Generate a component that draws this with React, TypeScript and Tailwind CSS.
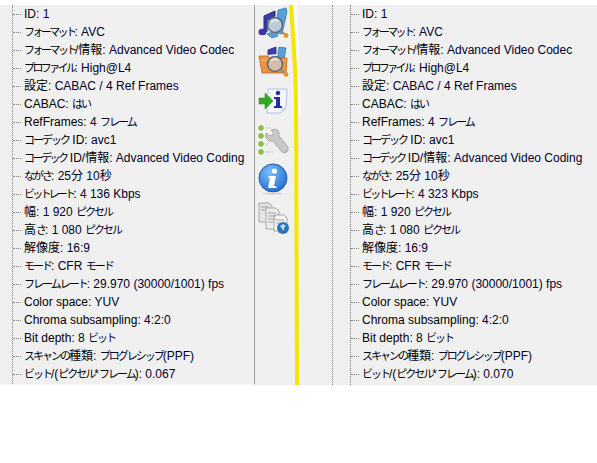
const font = '[font-family:"Liberation_Sans","Noto_Sans_CJK_JP",sans-serif]'

const left: [string, string][] = [
  ['ID', '1'],
  ['フォーマット', 'AVC'],
  ['フォーマット/情報', 'Advanced Video Codec'],
  ['プロファイル', 'High@L4'],
  ['設定', 'CABAC / 4 Ref Frames'],
  ['CABAC', 'はい'],
  ['RefFrames', '4 フレーム'],
  ['コーデック ID', 'avc1'],
  ['コーデック ID/情報', 'Advanced Video Coding'],
  ['ながさ', '25分 10秒'],
  ['ビットレート', '4 136 Kbps'],
  ['幅', '1 920 ピクセル'],
  ['高さ', '1 080 ピクセル'],
  ['解像度', '16:9'],
  ['モード', 'CFR モード'],
  ['フレームレート', '29.970 (30000/1001) fps'],
  ['Color space', 'YUV'],
  ['Chroma subsampling', '4:2:0'],
  ['Bit depth', '8 ビット'],
  ['スキャンの種類', 'プログレシップ(PPF)'],
  ['ビット/(ピクセル*フレーム)', '0.067'],
]

const right = left.map(([k, v]): [string, string] => {
  if (k === 'ビットレート') return [k, '4 323 Kbps']
  if (k === 'ビット/(ピクセル*フレーム)') return [k, '0.070']
  return [k, v]
})

const tight: Record<string, string> = {
  'フォーマット': 'tracking-[-2.6px]',
  'フォーマット/情報': 'tracking-[-2.5px]',
  'プロファイル': 'tracking-[-2.6px]',
  'コーデック ID/情報': 'tracking-[-2.5px]',
  'ビットレート': 'tracking-[-2.8px]',
}

// kana is much narrower in the original UI font
function Txt({ s, track = 'tracking-[-2px]' }: { s: string; track?: string }) {
  return (
    <>
      {s.split(/([\u3040-\u30ff]+)/).map((part, i) =>
        i % 2 === 1 ? (
          <span key={i} className={`text-[11px] ${track}`}>{part}</span>
        ) : (
          <span key={i}>{part}</span>
        ),
      )}
    </>
  )
}

function Rows({ rows }: { rows: [string, string][] }) {
  return (
    <div className="flex flex-col">
      {rows.map(([k, v]) => (
        <div key={k} className="flex h-[18px] items-center">
          <div className="mr-[3px] w-[8px] shrink-0 border-t border-dotted border-[#808080]" />
          <span className="whitespace-nowrap text-[12px] leading-[18px] text-black">
            <Txt s={k} track={tight[k]} />: <span className="text-[#00002a]"><Txt s={v} /></span>
          </span>
        </div>
      ))}
    </div>
  )
}

function Toolbar() {
  return (
    <div className="flex flex-col gap-[7px] pt-[2px]">
      <svg width="32" height="32" viewBox="0 0 32 32">
        <path d="M6 24V9l11-5v5L9 13v12" fill="#3c3cb0" stroke="#26267a" strokeWidth="1" />
        <ellipse cx="4.5" cy="25" rx="4" ry="3.2" fill="#3a36a8" />
        <path d="M20 3l8-2 1 4-5 22-6-1z" fill="#58a0d8" stroke="#2e70a8" strokeWidth=".7" />
        <path d="M9 27l8-3 3 5-6 2z" fill="#58a0d8" stroke="#2e70a8" strokeWidth=".7" />
        <circle cx="17" cy="18" r="7.5" fill="#bcccd8" stroke="#5e6878" strokeWidth="1.6" />
        <path d="M13 15q3-3 7-1" stroke="#eef4fa" strokeWidth="1.5" fill="none" />
        <path d="M22.5 23.5l5 4.5" stroke="#8a8a8a" strokeWidth="2.2" />
        <circle cx="28" cy="28.5" r="2.4" fill="#e49a20" />
      </svg>
      <svg width="32" height="32" viewBox="0 0 32 32">
        <path d="M10 9V4l8-3v7" fill="#3c3cb0" stroke="#26267a" strokeWidth=".8" />
        <path d="M20 6l1-5 7 1-2 12h-6z" fill="#58a0d8" stroke="#2e70a8" strokeWidth=".7" />
        <path d="M1 10h9l2 2h17l-1 15H4z" fill="#ee9440" stroke="#b8641e" strokeWidth=".8" />
        <path d="M2 14h26" stroke="#f8b878" />
        <circle cx="17" cy="18" r="7.5" fill="#d4bca8" stroke="#5e6878" strokeWidth="1.6" />
        <path d="M13 15q3-3 7-1" stroke="#f4ece4" strokeWidth="1.5" fill="none" />
        <path d="M22.5 23.5l5 4.5" stroke="#8a8a8a" strokeWidth="2.2" />
        <circle cx="28" cy="28.5" r="2.4" fill="#e49a20" />
      </svg>
      <svg width="32" height="32" viewBox="0 0 32 32">
        <path d="M10 4h19l-1 19-5 5H9z" fill="#f3f6fc" stroke="#b4c0dc" />
        <path d="M23 28l1-5 4 0z" fill="#ccd6ea" />
        <path d="M1 13h6V8l8 8-8 8v-5H1z" fill="#2fae1d" stroke="#1e8a12" strokeWidth=".5" />
        <circle cx="20" cy="8" r="2.2" fill="#2030a0" />
        <path d="M16 12h6v9h2v2h-8v-2h2v-7h-2z" fill="#2030a0" />
      </svg>
      <svg width="32" height="32" viewBox="0 0 32 32">
        <circle cx="3" cy="4" r="2.4" fill="#8cc83c" stroke="#6a9a30" strokeWidth=".5" />
        <circle cx="3" cy="12" r="2.4" fill="#8cc83c" stroke="#6a9a30" strokeWidth=".5" />
        <circle cx="3" cy="20" r="2.4" fill="#8cc83c" stroke="#6a9a30" strokeWidth=".5" />
        <circle cx="3" cy="28" r="2.4" fill="#8cc83c" stroke="#6a9a30" strokeWidth=".5" />
        <path d="M7 4h6M7 12h4M7 20h3M7 28h8" stroke="#dcdcdc" strokeWidth="1.5" />
        <path d="M13 6l5-1 3 3v4l9 11v4l-3 2-3-1-9-11h-4l-3-3 0-5 4 3 3-1 0-3z" fill="#c8c8c8" stroke="#989898" strokeWidth=".7" />
      </svg>
      <svg width="32" height="32" viewBox="0 0 32 32">
        <defs>
          <radialGradient id="infoBall" cx="40%" cy="30%" r="75%">
            <stop offset="0" stopColor="#7cc0fa" />
            <stop offset="1" stopColor="#1e6cd0" />
          </radialGradient>
        </defs>
        <circle cx="15" cy="15" r="14" fill="url(#infoBall)" stroke="#1e5ea8" />
        <circle cx="16.5" cy="8" r="2.6" fill="#fff" />
        <path d="M11 13h7l-2 10h2.5v2H10l2-10h-2z" fill="#fff" />
        <ellipse cx="15" cy="30.5" rx="10" ry="1.2" fill="#d0d0d0" />
      </svg>
      <svg width="32" height="32" viewBox="0 0 32 32">
        <path d="M1 1h10l3 3v16H1z" fill="#e4e4e4" stroke="#a8a8a8" />
        <path d="M8 6h10l3 3v18H8z" fill="#ececec" stroke="#a8a8a8" />
        <path d="M16 13h10l3 3v13H16z" fill="#f4f4f4" stroke="#a8a8a8" />
        <path d="M3 5h8M3 8h4M10 11h8M10 14h8M10 17h8M10 20h6M18 18h8M18 21h4" stroke="#a0a0a0" />
        <circle cx="25" cy="26" r="6" fill="#2a72b8" />
        <path d="M22 24l3-2 3 2-2 2v3l-2-2z" fill="#b8d8f0" />
      </svg>
    </div>
  )
}

export default function App() {
  return (
    <div className={`${font} h-[463px] w-[597px] overflow-hidden bg-white pt-[5px]`}>
      <div className="relative flex h-[380px] bg-[#f0f0f0]">
        <div className="w-[255px] shrink-0 overflow-hidden border-r border-b border-r-[#a0a0a0] border-b-[#f8f8f8] pl-[12px]">
          <div className="h-full border-l border-dotted border-[#808080]">
            <Rows rows={left} />
          </div>
        </div>
        <div className="w-[43px] shrink-0 pl-[3px]">
          <Toolbar />
        </div>
        <div className="w-[35px] shrink-0 border-r border-dotted border-[#808080]" />
        <div className="min-w-0 flex-1 overflow-hidden pl-[17px]">
          <div className="h-full border-l border-dotted border-[#808080]">
            <Rows rows={right} />
          </div>
        </div>
        {/* yellow marker line drawn over the shot */}
        <svg className="absolute left-[288px] top-0" width="14" height="380" viewBox="0 0 14 380">
          <path d="M5 0h4C10 30 12 70 13 110L10 110C10 70 8 30 5 0z" fill="#fbfbfb" />
          <path d="M1 0h4C7 30 10 70 10 100L11 380H7L6 100C6 70 3 30 1 0z" fill="#f5e600" />
        </svg>
      </div>
    </div>
  )
}
